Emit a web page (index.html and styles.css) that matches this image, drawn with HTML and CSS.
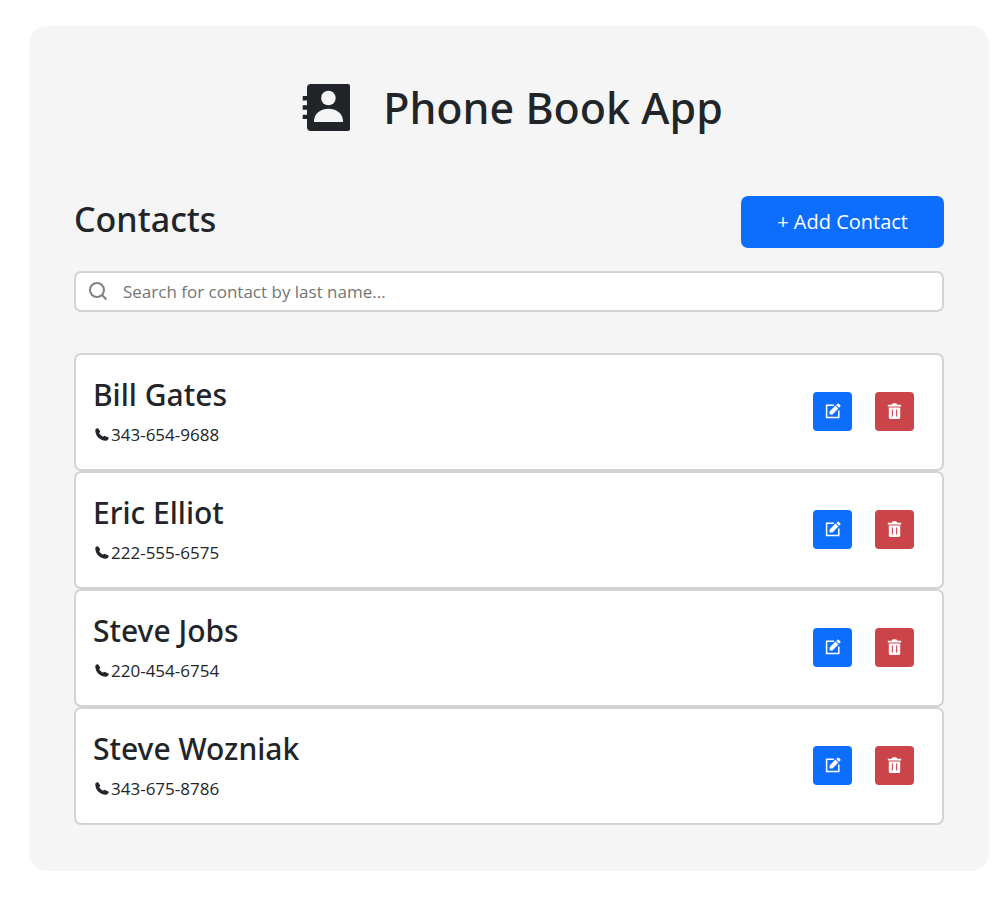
FILE: index.html
```html
<!DOCTYPE html>
<html lang="en">
<head>
<meta charset="utf-8">
<meta name="viewport" content="width=device-width, initial-scale=1">
<title>Phone Book App</title>
<link rel="stylesheet" href="styles.css">
</head>
<body>
<svg class="sprite" aria-hidden="true">
  <symbol id="phone" viewBox="0 0 14 14"><path d="M.3 1.8Q.5.8 2 .3Q3 0 3.5.8L5 3.2Q5.2 3.9 4.7 4.5L4.2 5.3Q5.4 7.7 8 8.8L8.8 8.1Q9.3 7.7 9.9 8L13 9.2Q14 9.6 13.7 10.4Q13 12.4 11.1 12.7C5 12.9.1 8.1.3 1.8Z"/></symbol>
  <symbol id="edit" viewBox="0 0 16 16"><path d="M9 2.2H1.6V14.4H13.8V7.5" fill="none" stroke="currentColor" stroke-width="1.5"/><path d="M4.6 11.5V8.4L10.4 2.6L13.4 5.6L7.5 11.5ZM11.2 2L12.5.7Q13.1.2 13.7.7L15.3 2.3Q15.8 2.9 15.3 3.5L14 4.8Z"/></symbol>
  <symbol id="trash" viewBox="0 0 16 16"><path fill-rule="evenodd" d="M.8 1.8H4.6Q5 .2 6.3.2H8.7Q10 .2 10.4 1.8H14.2V3.4H.8ZM1.8 4.4H13.2V14.4Q13.2 16 11.6 16H3.4Q1.8 16 1.8 14.4ZM4.8 6.4V13.4H5.9V6.4ZM9.1 6.4V13.4H10.2V6.4Z"/></symbol>
</svg>
<main class="app">
  <header class="app-header">
    <svg class="logo" viewBox="0 0 48 48" aria-hidden="true">
      <path d="M8 0H46Q48 0 48 2V45Q48 47 46 47H9Q5 47 5 43V4Q5 0 9 0ZM.7 12H6V16.5H.7ZM.7 21.3H6V25.7H.7ZM.7 30.7H6V35H.7Z"/>
      <circle class="logo-person" cx="26.4" cy="14" r="7.3"/>
      <path class="logo-person" d="M12 38V36C13 29 19 24.8 26.5 24.8S40 29 41 36V38Z"/>
    </svg>
    <h1>Phone Book App</h1>
  </header>
  <div class="toolbar">
    <h2>Contacts</h2>
    <button class="add" type="button">+ Add Contact</button>
  </div>
  <label class="search">
    <svg class="search-icon" viewBox="0 0 20 20" aria-hidden="true"><circle cx="9" cy="8" r="7"/><path d="M14 13L18.5 17.5"/></svg>
    <input type="text" aria-label="Search contacts" placeholder="Search for contact by last name...">
  </label>
  <ul class="contacts">
    <li class="contact">
      <div class="details"><h3>Bill Gates</h3><p><svg class="phone"><use href="#phone"/></svg>343-654-9688</p></div>
      <div class="actions"><button class="edit" type="button" aria-label="Edit Bill Gates"><svg><use href="#edit"/></svg></button><button class="delete" type="button" aria-label="Delete Bill Gates"><svg><use href="#trash"/></svg></button></div>
    </li>
    <li class="contact">
      <div class="details"><h3>Eric Elliot</h3><p><svg class="phone"><use href="#phone"/></svg>222-555-6575</p></div>
      <div class="actions"><button class="edit" type="button" aria-label="Edit Eric Elliot"><svg><use href="#edit"/></svg></button><button class="delete" type="button" aria-label="Delete Eric Elliot"><svg><use href="#trash"/></svg></button></div>
    </li>
    <li class="contact">
      <div class="details"><h3>Steve Jobs</h3><p><svg class="phone"><use href="#phone"/></svg>220-454-6754</p></div>
      <div class="actions"><button class="edit" type="button" aria-label="Edit Steve Jobs"><svg><use href="#edit"/></svg></button><button class="delete" type="button" aria-label="Delete Steve Jobs"><svg><use href="#trash"/></svg></button></div>
    </li>
    <li class="contact">
      <div class="details"><h3>Steve Wozniak</h3><p><svg class="phone"><use href="#phone"/></svg>343-675-8786</p></div>
      <div class="actions"><button class="edit" type="button" aria-label="Edit Steve Wozniak"><svg><use href="#edit"/></svg></button><button class="delete" type="button" aria-label="Delete Steve Wozniak"><svg><use href="#trash"/></svg></button></div>
    </li>
  </ul>
</main>
</body>
</html>
```
FILE: styles.css
```css
* { box-sizing: border-box; }
body {
  margin: 0;
  padding: 26px 11px 27px 29px;
  background: #fff;
  color: #212529;
  font-family: "Segoe UI", "Open Sans", "Noto Sans", sans-serif;
}
h1, h2, h3, p, ul { margin: 0; padding: 0; }
h1, h2, h3 {
  font-family: "Segoe UI", "Noto Sans", "Open Sans", sans-serif;
  font-weight: 500;
}
button, input { font: inherit; }
svg { flex: none; fill: currentColor; }
.sprite { display: none; }
.app {
  padding: 45px 45px 46px;
  border-radius: 18px;
  background: #f5f5f5;
}
.app-header {
  display: flex;
  align-items: center;
  justify-content: center;
  gap: 33px;
  padding: 7px 0 58px 7px;
}
.app-header h1 { font-size: 43px; line-height: 60px; }
.logo { width: 48px; height: 48px; }
.logo-person { fill: #f5f5f5; }
.toolbar {
  display: flex;
  align-items: flex-start;
  justify-content: space-between;
  margin-bottom: 23px;
}
.toolbar h2 { font-size: 34px; line-height: 46px; }
.add {
  padding: 12px 36px;
  border: 0;
  border-radius: 7px;
  background: #0d6efd;
  color: #fff;
  font-size: 20px;
  line-height: 28px;
}
.search {
  display: flex;
  align-items: center;
  gap: 15px;
  padding: 0 12px;
  border: 2px solid #d3d3d3;
  border-radius: 7px;
  background: #fff;
}
.search-icon {
  width: 20px;
  height: 20px;
  fill: none;
  stroke: #808080;
  stroke-width: 2;
}
.search input {
  flex: 1;
  min-width: 0;
  padding: 4px 0;
  border: 0;
  outline: 0;
  background: none;
  color: #212529;
  font-size: 17px;
  line-height: 29px;
}
.search input::placeholder { color: #757575; }
.contacts { margin-top: 41px; list-style: none; }
.contact {
  display: flex;
  align-items: center;
  justify-content: space-between;
  padding: 19px 28px 21px 17px;
  border: 2px solid #d3d3d3;
  border-radius: 7px;
  background: #fff;
}
.contact h3 { font-size: 30px; line-height: 42px; }
.contact p {
  display: flex;
  align-items: center;
  gap: 2px;
  padding: 5px 0 0 2px;
  font-size: 17px;
  line-height: 27px;
}
.phone { width: 14px; height: 14px; }
.actions { display: flex; gap: 23px; }
.actions button {
  display: grid;
  place-items: center;
  width: 39px;
  height: 39px;
  padding: 0;
  border: 0;
  border-radius: 4px;
  color: #fff;
}
.actions svg { width: 16px; height: 16px; }
.edit { background: #0d6efd; }
.delete { background: #cb444a; }
```
